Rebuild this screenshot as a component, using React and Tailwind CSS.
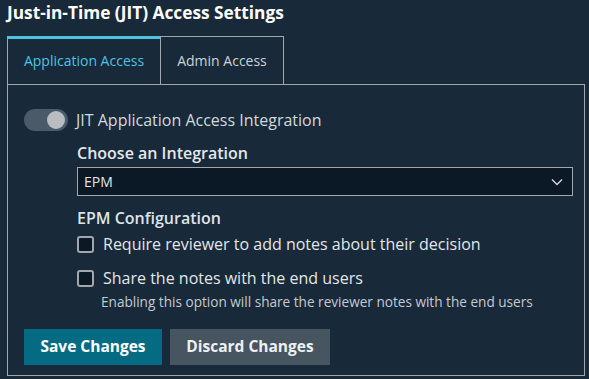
import React, { useState } from "react";

const font = { fontFamily: '"Open Sans", "Noto Sans", sans-serif' };

function Toggle({ on, onChange }) {
  return (
    <button
      onClick={() => onChange(!on)}
      className="relative w-[44px] h-[22px] rounded-full bg-[#4a5a68] shrink-0"
    >
      <span className="absolute top-[2px] right-[3px] w-[18px] h-[18px] rounded-full bg-[#b9bdc1]" />
    </button>
  );
}

function Check({ label, checked, onChange }) {
  return (
    <label className="flex items-center gap-[9px] cursor-pointer">
      <span
        onClick={() => onChange(!checked)}
        className="w-[17px] h-[17px] rounded-[3px] border-2 border-[#a3a7ab] bg-[#0b1826] shrink-0"
      />
      <span className="text-[16px] leading-[22px] text-[#e3e6e9]">{label}</span>
    </label>
  );
}

export default function App() {
  const [tab, setTab] = useState("app");
  const [requireNotes, setRequireNotes] = useState(false);
  const [shareNotes, setShareNotes] = useState(false);
  const [jit, setJit] = useState(true);

  return (
    <div className="w-[589px] h-[379px] bg-[#18293a] pl-[7px] overflow-hidden" style={font}>
      <h1 className="text-[17.3px] font-bold leading-[22px] pt-[2px] text-white">
        Just-in-Time (JIT) Access Settings
      </h1>

      {/* tabs */}
      <div className="flex mt-[12px] h-[48px]">
        <button
          onClick={() => setTab("app")}
          className="w-[153px] border-l border-[#a3a7ab] border-t-[3px] border-t-[#4ec3e0] text-[14px] text-[#4ec3e0] pb-[2px]"
        >
          Application Access
        </button>
        <button
          onClick={() => setTab("admin")}
          className="w-[124px] border-l border-t border-r border-[#a3a7ab] text-[14px] text-[#cdd2d7] pb-[1px]"
        >
          Admin Access
        </button>
      </div>

      {/* panel */}
      <div className="w-[578px] h-[292px] border border-[#a3a7ab] pl-[16px] pr-[11px] pt-[24px]">
        <div className="flex items-center gap-[8px]">
          <Toggle on={jit} onChange={setJit} />
          <span className="text-[16px] leading-[22px] text-[#d3d8dd]">
            JIT Application Access Integration
          </span>
        </div>

        <div className="ml-[53px]">
          <div className="text-[16px] font-semibold leading-[22px] text-[#e3e6e9] mt-[11px]">
            Choose an Integration
          </div>
          <div className="mt-[3px] h-[29px] border border-[#a3a7ab] bg-[#0b1826] flex items-center justify-between pl-[6px] pr-[8px]">
            <span className="text-[14px] text-[#e3e6e9]">EPM</span>
            <svg width="14" height="14" viewBox="0 0 14 14" fill="none">
              <path d="M2 4.5 L7 9.5 L12 4.5" stroke="#d0d4d8" strokeWidth="1.5" />
            </svg>
          </div>

          <div className="text-[16px] font-semibold leading-[22px] text-[#dfe3e7] mt-[11px]">
            EPM Configuration
          </div>
          <div className="mt-[4px]">
            <Check
              label="Require reviewer to add notes about their decision"
              checked={requireNotes}
              onChange={setRequireNotes}
            />
          </div>
          <div className="mt-[12px]">
            <Check
              label="Share the notes with the end users"
              checked={shareNotes}
              onChange={setShareNotes}
            />
          </div>
          <div className="ml-[24px] text-[13.6px] leading-[18px] text-[#c5cad0] mt-[4px]">
            Enabling this option will share the reviewer notes with the end users
          </div>
        </div>

        <div className="flex gap-[8px] mt-[18px]">
          <button className="w-[138px] h-[36px] bg-[#056b82] text-white text-[15.5px] font-bold">
            Save Changes
          </button>
          <button className="w-[160px] h-[36px] bg-[#46555f] text-[#eef0f2] text-[15.5px] font-bold">
            Discard Changes
          </button>
        </div>
      </div>
    </div>
  );
}
